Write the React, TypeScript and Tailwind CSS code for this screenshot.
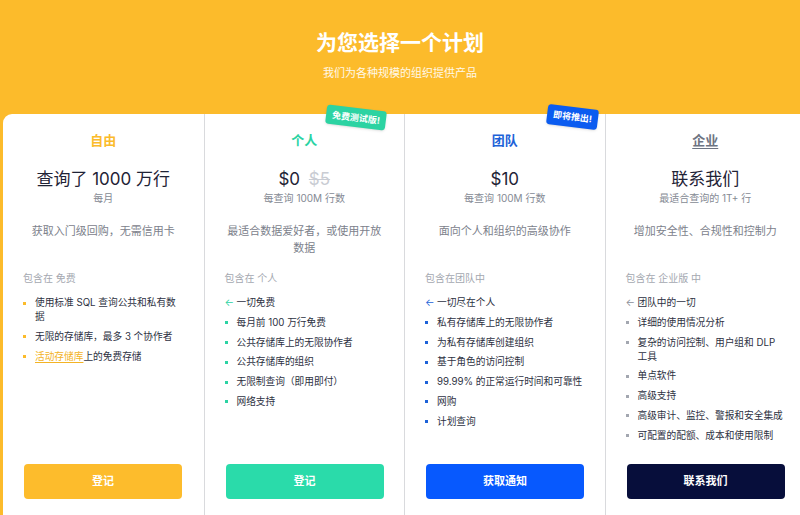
import React from "react";

type Plan = {
  name: string;
  nameClass: string;
  price: React.ReactNode;
  sub: string;
  desc: string;
  includes: string;
  bullet: string;
  arrow?: string;
  features: React.ReactNode[];
  button: string;
  buttonClass: string;
  badge?: React.ReactNode;
};

const plans: Plan[] = [
  {
    name: "自由",
    nameClass: "text-[#fbbb2b]",
    price: "查询了 1000 万行",
    sub: "每月",
    desc: "获取入门级回购，无需信用卡",
    includes: "包含在 免费",
    bullet: "bg-[#fbbb2b]",
    features: [
      "使用标准 SQL 查询公共和私有数据",
      "无限的存储库，最多 3 个协作者",
      <>
        <span className="text-[#f3b325] underline underline-offset-2">活动存储库</span>上的免费存储
      </>,
    ],
    button: "登记",
    buttonClass: "bg-[#fdbc2c]",
  },
  {
    name: "个人",
    nameClass: "text-[#2bd3a3]",
    price: (
      <>
        $0 <span className="ml-1 text-[#c9ccd3] line-through">$5</span>
      </>
    ),
    sub: "每查询 100M 行数",
    desc: "最适合数据爱好者，或使用开放数据",
    includes: "包含在 个人",
    bullet: "bg-[#2bd3a3]",
    arrow: "text-[#2bd3a3]",
    features: ["一切免费", "每月前 100 万行免费", "公共存储库上的无限协作者", "公共存储库的组织", "无限制查询（即用即付）", "网络支持"],
    button: "登记",
    buttonClass: "bg-[#2adbaa]",
    badge: (
      <div className="absolute right-[18px] top-[-6px] rotate-[7deg] rounded-[3px] bg-[#2cd3a2] px-[6px] py-[3px] text-[9px] font-bold leading-[13px] text-white shadow-sm">
        免费测试版!
      </div>
    ),
  },
  {
    name: "团队",
    nameClass: "text-[#1d62d8]",
    price: "$10",
    sub: "每查询 100M 行数",
    desc: "面向个人和组织的高级协作",
    includes: "包含在团队中",
    bullet: "bg-[#1d62d8]",
    arrow: "text-[#1d62d8]",
    features: ["一切尽在个人", "私有存储库上的无限协作者", "为私有存储库创建组织", "基于角色的访问控制", "99.99% 的正常运行时间和可靠性", "网购", "计划查询"],
    button: "获取通知",
    buttonClass: "bg-[#0759fe]",
    badge: (
      <div className="absolute right-[6px] top-[-7px] rotate-[7deg] rounded-[3px] bg-[#0b5cf0] px-[6px] py-[3px] text-[9px] font-bold leading-[14px] text-white shadow-sm">
        即将推出!
      </div>
    ),
  },
  {
    name: "企业",
    nameClass: "text-[#6d7482] underline underline-offset-[3px]",
    price: "联系我们",
    sub: "最适合查询的 1T+ 行",
    desc: "增加安全性、合规性和控制力",
    includes: "包含在 企业版 中",
    bullet: "bg-[#a3a7b0]",
    arrow: "text-[#8a8f99]",
    features: ["团队中的一切", "详细的使用情况分析", "复杂的访问控制、用户组和 DLP 工具", "单点软件", "高级支持", "高级审计、监控、警报和安全集成", "可配置的配额、成本和使用限制"],
    button: "联系我们",
    buttonClass: "bg-[#070e3b]",
  },
];

function PlanColumn({ plan, first }: { plan: Plan; first: boolean }) {
  return (
    <div className={`relative flex h-full flex-col px-[20px] pb-[16px] pt-[17px] ${first ? "" : "border-l border-[#d9dadd]"}`}>
      {plan.badge}
      <div className={`text-center text-[13px] font-bold leading-[18px] ${plan.nameClass}`}>{plan.name}</div>
      <div className="mt-[18px] text-center text-[17px] leading-[24px] text-[#1f2336]">{plan.price}</div>
      <div className="text-center text-[10px] leading-[14px] text-[#858a94]">{plan.sub}</div>
      <div className="mt-[18px] h-[34px] text-center text-[11px] leading-[17px] text-[#7c818b]">{plan.desc}</div>
      <div className="mt-[14px] text-[10px] leading-[14px] text-[#a4a8b0]">{plan.includes}</div>
      <ul className="mt-[11px] flex w-[161px] flex-col gap-[5.8px]">
        {plan.features.map((f, i) => (
          <li key={i} className="flex items-start text-[9.7px] leading-[14px] text-[#2d3142]">
            {plan.arrow && i === 0 ? (
              <span className={`w-[11px] shrink-0 text-[10px] leading-[13px] ${plan.arrow}`}>←</span>
            ) : (
              <span className="flex h-[14px] w-[11px] shrink-0 items-center">
                <span className={`h-[3px] w-[3px] ${plan.bullet}`} />
              </span>
            )}
            <span className="ml-[1px]">{f}</span>
          </li>
        ))}
      </ul>
      <button className={`mt-auto ml-[1px] h-[35px] w-[158px] rounded-[4px] text-[11px] font-bold text-white ${plan.buttonClass}`}>
        {plan.button}
      </button>
    </div>
  );
}

export default function App() {
  return (
    <div
      className="flex h-[515px] w-[800px] flex-col overflow-hidden bg-[#fcbb2b]"
      style={{ fontFamily: 'Inter, "Noto Sans CJK SC", sans-serif' }}
    >
      <div className="flex flex-col items-center pt-[29px]">
        <h1 className="text-[21px] font-bold leading-[28px] text-white">为您选择一个计划</h1>
        <p className="mt-[8px] text-[11px] leading-[16px] text-white/90">我们为各种规模的组织提供产品</p>
      </div>
      <div className="ml-[3px] mt-[33px] grid w-[802px] flex-1 grid-cols-4 rounded-tl-[9px] bg-white">
        {plans.map((p, i) => (
          <PlanColumn key={p.name} plan={p} first={i === 0} />
        ))}
      </div>
    </div>
  );
}
